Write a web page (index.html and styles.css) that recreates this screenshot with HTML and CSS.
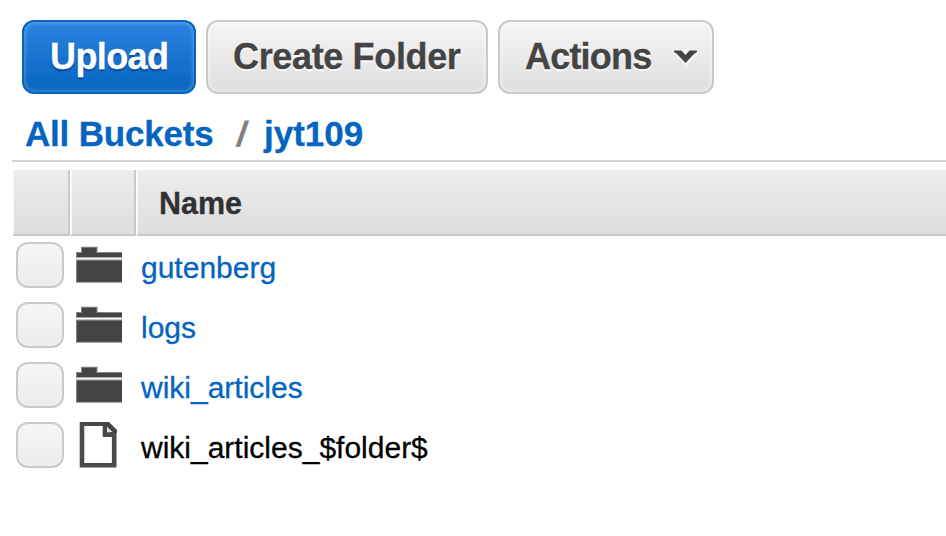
FILE: index.html
```html
<!DOCTYPE html>
<html lang="en">
<head>
<meta charset="utf-8">
<title>jyt109</title>
<link rel="stylesheet" href="styles.css">
</head>
<body>
<svg width="0" height="0" class="symbols" aria-hidden="true">
  <symbol id="folder" viewBox="0 0 46 40">
    <path class="edge" d="M0 8h5V2.7h16.5V8H46v5.8H0zM0 15.5h46v23.3H0z"/>
    <path class="ink" d="M1 9h5V3.8h14.5V9H46v4H1zM1 16.8h45v21H1z"/>
  </symbol>
  <symbol id="file" viewBox="0 0 40 46">
    <path class="outline" d="M4 1.8H27L36.2 11.5V43.2H4z"/>
    <path class="outline" d="M27 0V12.6H37"/>
    <path class="ink" d="M25 0h6l8 8v3h-4l-7-7h-3z"/>
    <path class="fold" d="M29 4.5v5.5h5.5z"/>
  </symbol>
</svg>
<nav class="toolbar">
  <button class="btn primary">Upload</button>
  <button class="btn create">Create Folder</button>
  <button class="btn actions">Actions
    <svg class="chevron" width="26" height="18" viewBox="0 0 26 18"><path class="chevron-glow" d="M0 2h25v4L13 18 2 7z"/><path class="ink" d="M1 2.5h7.5l4 4.5 4-4.5H24V4l-3 2-8.5 9L4 6 1 4z"/></svg>
  </button>
</nav>
<div class="crumbs"><a class="all">All Buckets</a><span class="slash">/</span><a class="bucket">jyt109</a></div>
<main class="list">
  <div class="row head"><span></span><span></span><span class="name">Name</span></div>
  <div class="row"><i class="check"></i><svg class="folder"><use href="#folder"/></svg><a class="label">gutenberg</a></div>
  <div class="row"><i class="check"></i><svg class="folder"><use href="#folder"/></svg><a class="label">logs</a></div>
  <div class="row"><i class="check"></i><svg class="folder"><use href="#folder"/></svg><a class="label">wiki_articles</a></div>
  <div class="row"><i class="check"></i><svg class="file"><use href="#file"/></svg><span class="label">wiki_articles_$folder$</span></div>
</main>
</body>
</html>
```

FILE: styles.css
```css
* { box-sizing: border-box; }
body {
  margin: 0;
  height: 536px;
  overflow: hidden;
  background: #fff;
  color: #000;
  font-family: "Liberation Sans", Arial, sans-serif;
}
a { color: #0464c0; }
.symbols { position: absolute; }
.ink { fill: #444; }
.edge { fill: #858585; }
.fold { fill: #ddd; }
.outline { fill: none; stroke: #4a4a4a; stroke-width: 4.6; }
.toolbar { display: flex; gap: 10px; padding: 20px 22px 0; }
.btn {
  display: flex;
  align-items: center;
  height: 74px;
  margin: 0;
  padding: 0 0 1px 25px;
  border: 2px solid #c9c9c9;
  border-radius: 12px;
  background: linear-gradient(#f6f6f6, #dedede);
  box-shadow: inset 0 0 5px rgba(255, 255, 255, .8);
  color: #444;
  font: bold 36px/40px "Liberation Sans", Arial, sans-serif;
  letter-spacing: -.35px;
  -webkit-text-stroke: .3px;
  text-shadow: 0 2px 1px #fff;
  white-space: nowrap;
}
.primary {
  width: 174px;
  padding-left: 26px;
  border-color: #0665c0;
  background: linear-gradient(#2b83e0, #0665c0);
  box-shadow: inset 0 0 5px rgba(255, 255, 255, .4);
  color: #fff;
  letter-spacing: -.6px;
  text-shadow: 0 2px 2px #0b4598;
}
.create { width: 282px; }
.actions { width: 216px; padding-bottom: 0; letter-spacing: -.8px; }
.chevron { margin: 0 0 1px 22px; }
.chevron-glow { fill: #f6f6f6; }
.crumbs {
  display: flex;
  height: 68px;
  margin-left: 12px;
  padding: 20px 0 0 13px;
  border-bottom: 2px solid #d5d5d5;
  font: bold 35px/40px "Liberation Sans", Arial, sans-serif;
  -webkit-text-stroke: .3px;
}
.all { width: 212px; letter-spacing: -.2px; }
.slash { width: 27px; color: #808080; transform: skewX(-9deg); }
.list { padding: 6px 0 0 13px; }
.row {
  display: grid;
  grid-template-columns: 58px 66px 1fr;
  grid-template-rows: 60px;
  font-size: 30px;
}
.head { grid-template-rows: 68px; }
.head span {
  border: solid #c8c8c8;
  border-width: 0 2px 2px 0;
  margin-top: 2px;
  margin-right: 1px;
  background: linear-gradient(90deg, #f6f6f6 1px, transparent 1px), linear-gradient(#ededed, #dedede);
}
.head .name {
  margin-right: 0;
  border-right: 0;
  padding-left: 22px;
  color: #303133;
  font-size: 30.5px;
  font-weight: bold;
  line-height: 67px;
  -webkit-text-stroke: .3px;
}
.check {
  width: 48px;
  height: 46px;
  margin: 6px 0 0 3px;
  border: 2px solid #cacaca;
  border-radius: 12px;
  background: linear-gradient(#f6f6f6, #ececec);
}
.folder { width: 46px; height: 40px; margin: 8px 0 0 5px; }
.file { width: 40px; height: 46px; margin: 6px 0 0 7px; }
.label { padding-left: 4px; line-height: 64px; -webkit-text-stroke: .3px; }
```
